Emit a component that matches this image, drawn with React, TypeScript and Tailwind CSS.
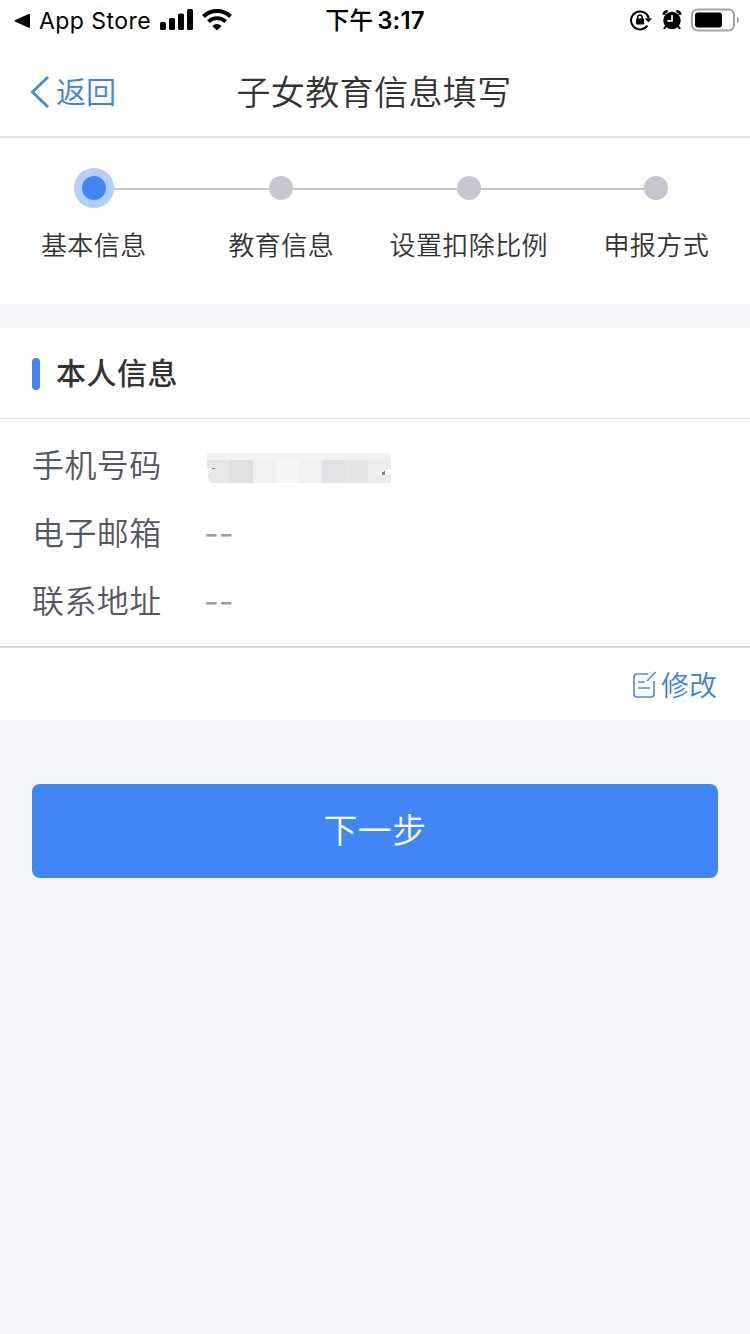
import { Fragment } from 'react';

type Step = {
  label: string;
  active?: boolean;
};

const steps: Step[] = [
  { label: '基本信息', active: true },
  { label: '教育信息' },
  { label: '设置扣除比例' },
  { label: '申报方式' },
];

const contacts = [
  { label: '手机号码', masked: true },
  { label: '电子邮箱', masked: false },
  { label: '联系地址', masked: false },
];

const maskColors = ['#e6e7e9', '#dfe0e2', '#f0f0f0', '#f5f5f5', '#f0f0f0', '#e1e2e6', '#e6e6e9', '#ebeced'];

function StatusBar() {
  return (
    <div className="h-10 shrink-0 grid grid-cols-[1fr_auto_1fr] items-center font-normal text-black">
      <div className="flex items-center pl-[14px]">
        <svg className="mt-px" width="17" height="16" viewBox="0 0 17 16">
          <path d="M1 7.2 14.6 1.1Q16 .6 16 2v11.8q0 1.4-1.4.9L1 8.6Q-.2 7.9 1 7.2Z" />
        </svg>
        <span className="ml-2 pt-0.5 text-[23px] leading-[38px] tracking-[0.45px]">App Store</span>
        <svg className="ml-[9px]" width="34" height="22" viewBox="0 0 34 22">
          <rect x="0" y="13" width="6" height="8" rx="1.5" />
          <rect x="9" y="9" width="6" height="12" rx="1.5" />
          <rect x="18" y="4.500" width="6" height="16.500" rx="1.5" />
          <rect x="27" y="0" width="6" height="21" rx="1.5" />
        </svg>
        <svg className="ml-[7px]" width="32" height="24" viewBox="0 0 32 24">
          <path d="M2.500 8.500a19.500 19.500 0 0 1 27 0" fill="none" stroke="#000" strokeWidth="4" />
          <path d="M7.400 13.500a12.500 12.500 0 0 1 17.200 0" fill="none" stroke="#000" strokeWidth="3.800" />
          <path d="M11.300 17.900a6.800 6.800 0 0 1 9.400 0L16 22.500Z" />
        </svg>
      </div>
      <div className="flex items-center gap-1 pt-0.5 text-2xl font-medium leading-[38px]">
        <span>下午</span>
        <span className="font-semibold tracking-[0.2px]">3:17</span>
      </div>
      <div className="flex items-center justify-end pr-[11px]">
        <svg width="22" height="22" viewBox="0 0 22 22">
          <path d="M17.400 16.600A9 9 0 1 1 18.700 9" fill="none" stroke="#000" strokeWidth="2" />
          <path d="M14.800 9.200h7L18.500 13.500Z" />
          <rect x="6" y="9.500" width="8" height="6" rx="0.800" />
          <path d="M7.800 10V8.300a2.200 2.200 0 0 1 4.400 0V10" fill="none" stroke="#000" strokeWidth="1.500" />
        </svg>
        <svg className="ml-[10px]" width="20" height="20" viewBox="0 0 20 20">
          <circle cx="10" cy="10.500" r="8.700" />
          <path d="M1.600 4.800A4 4 0 0 1 5.600 1.300M18.400 4.800A4 4 0 0 0 14.400 1.300" fill="none" stroke="#000" strokeWidth="2.400" />
          <path d="m4 16-2 3M16 16l2 3" stroke="#000" strokeWidth="2.200" />
          <path d="M10 5v5.800H5.200" fill="none" stroke="#fff" strokeWidth="1.700" />
        </svg>
        <svg className="ml-[9px]" width="48" height="24" viewBox="0 0 48 24">
          <rect x="1" y="1.500" width="42" height="21" rx="5.500" fill="none" stroke="#a3a3a3" strokeWidth="2" />
          <rect x="4" y="4.500" width="27" height="15" rx="3" />
          <path d="M46 8.500q2 1 2 3.500t-2 3.500Z" fill="#a3a3a3" />
        </svg>
      </div>
    </div>
  );
}

function StepItem({ step, first, last }: { step: Step; first: boolean; last: boolean }) {
  return (
    <div className="flex flex-1 flex-col items-center">
      <div className="flex h-10 w-full items-center">
        <div className={first ? 'flex-1' : 'mt-0.5 h-0.5 flex-1 bg-[#c6c6d0]'} />
        {step.active ? (
          <div className="flex size-10 items-center justify-center rounded-full bg-[#b3d0fa]">
            <div className="size-6 rounded-full bg-[#4285f4]" />
          </div>
        ) : (
          <div className="size-6 rounded-full bg-[#c6c6d0]" />
        )}
        <div className={last ? 'flex-1' : 'mt-0.5 h-0.5 flex-1 bg-[#c6c6d0]'} />
      </div>
      <span className="mt-[18px] whitespace-nowrap text-[26px] leading-10 tracking-[0.4px]">{step.label}</span>
    </div>
  );
}

// Mosaic over the phone number
function MaskedValue() {
  return (
    <svg width="184" height="30" viewBox="0 0 184 30" shapeRendering="crispEdges">
      <rect width="184" height="7" fill="#f2f3f3" />
      {maskColors.map((color, i) => (
        <rect key={i} x={i * 23} y="7" width="23" height="23" fill={color} />
      ))}
      <path d="M0 15h8q-7 2-7 8 0 5 4 7H0ZM184 16q-5 0-6 3-7-1-10 1 5 2 9 2h7Z" fill="#fff" shapeRendering="auto" />
      <path d="M5 15h3v1H5ZM175 19l3-1v4h-3Z" fill="#858585" />
    </svg>
  );
}

export default function App() {
  return (
    <div className="flex min-h-[1334px] w-[750px] flex-col bg-[#f4f6fa] font-['Inter','Noto_Sans_CJK_SC',sans-serif] font-[350] text-[#333]">
      <div className="bg-white">
        <StatusBar />
        <header className="grid h-[98px] grid-cols-[1fr_auto_1fr] items-center border-b-2 border-[#e2e2e2] pt-1">
          <button className="flex items-center pl-[30px] pt-1 text-[#4080e4]">
            <svg width="20" height="34" viewBox="0 0 20 34">
              <path d="M18 2 2.500 17 18 32" fill="none" stroke="#4285f4" strokeWidth="2.800" />
            </svg>
            <span className="ml-1.5 text-[30px] leading-10">返回</span>
          </button>
          <h1 className="pr-0.5 pt-[5px] text-[34px] leading-[48px] tracking-[0.4px]">子女教育信息填写</h1>
        </header>
        <div className="flex h-[166px] pt-[30px]">
          {steps.map((step, i) => (
            <StepItem key={step.label} step={step} first={i === 0} last={i === steps.length - 1} />
          ))}
        </div>
      </div>

      <section className="mt-6 bg-white">
        <div className="flex h-[91px] items-center border-b border-[#dedede] pl-8">
          <div className="mt-0.5 h-8 w-2 rounded-full bg-[#4285f4]" />
          <h2 className="ml-4 text-[30px] font-medium leading-10 tracking-[0.5px]">本人信息</h2>
        </div>
        <div className="grid h-[229px] grid-cols-[175px_1fr] content-start border-b-2 border-[#d9d9d9] pl-8 pt-[13px]">
          {contacts.map((item) => (
            <Fragment key={item.label}>
              <span className="h-[68px] text-[32px] leading-[68px] tracking-[0.4px] text-[#555762]">{item.label}</span>
              {item.masked ? (
                <div className="flex h-[68px] items-center pt-1">
                  <MaskedValue />
                </div>
              ) : (
                <span className="-ml-[3px] h-[68px] text-[32px] font-normal leading-[68px] text-[#9a9ba3]">--</span>
              )}
            </Fragment>
          ))}
        </div>
        <div className="flex h-[72px] items-center justify-end pr-[33px] pt-1">
          <button className="flex items-center text-[#4080e4]">
            <svg className="-mt-0.5" width="26" height="28" viewBox="0 0 26 28" fill="none" stroke="#4c84ee" strokeWidth="1.600">
              <path d="M15 3H4Q1 3 1 6v17q0 3 3 3h14q3 0 3-3V10M14 10l8.500-9M5 11h7M5 17h12" />
            </svg>
            <span className="ml-0.5 text-[28px] leading-10">修改</span>
          </button>
        </div>
      </section>

      <button className="mx-8 mt-16 h-[94px] rounded-lg bg-[#4285f4] text-[34px] leading-[94px] tracking-[0.4px] text-white">
        下一步
      </button>
    </div>
  );
}
